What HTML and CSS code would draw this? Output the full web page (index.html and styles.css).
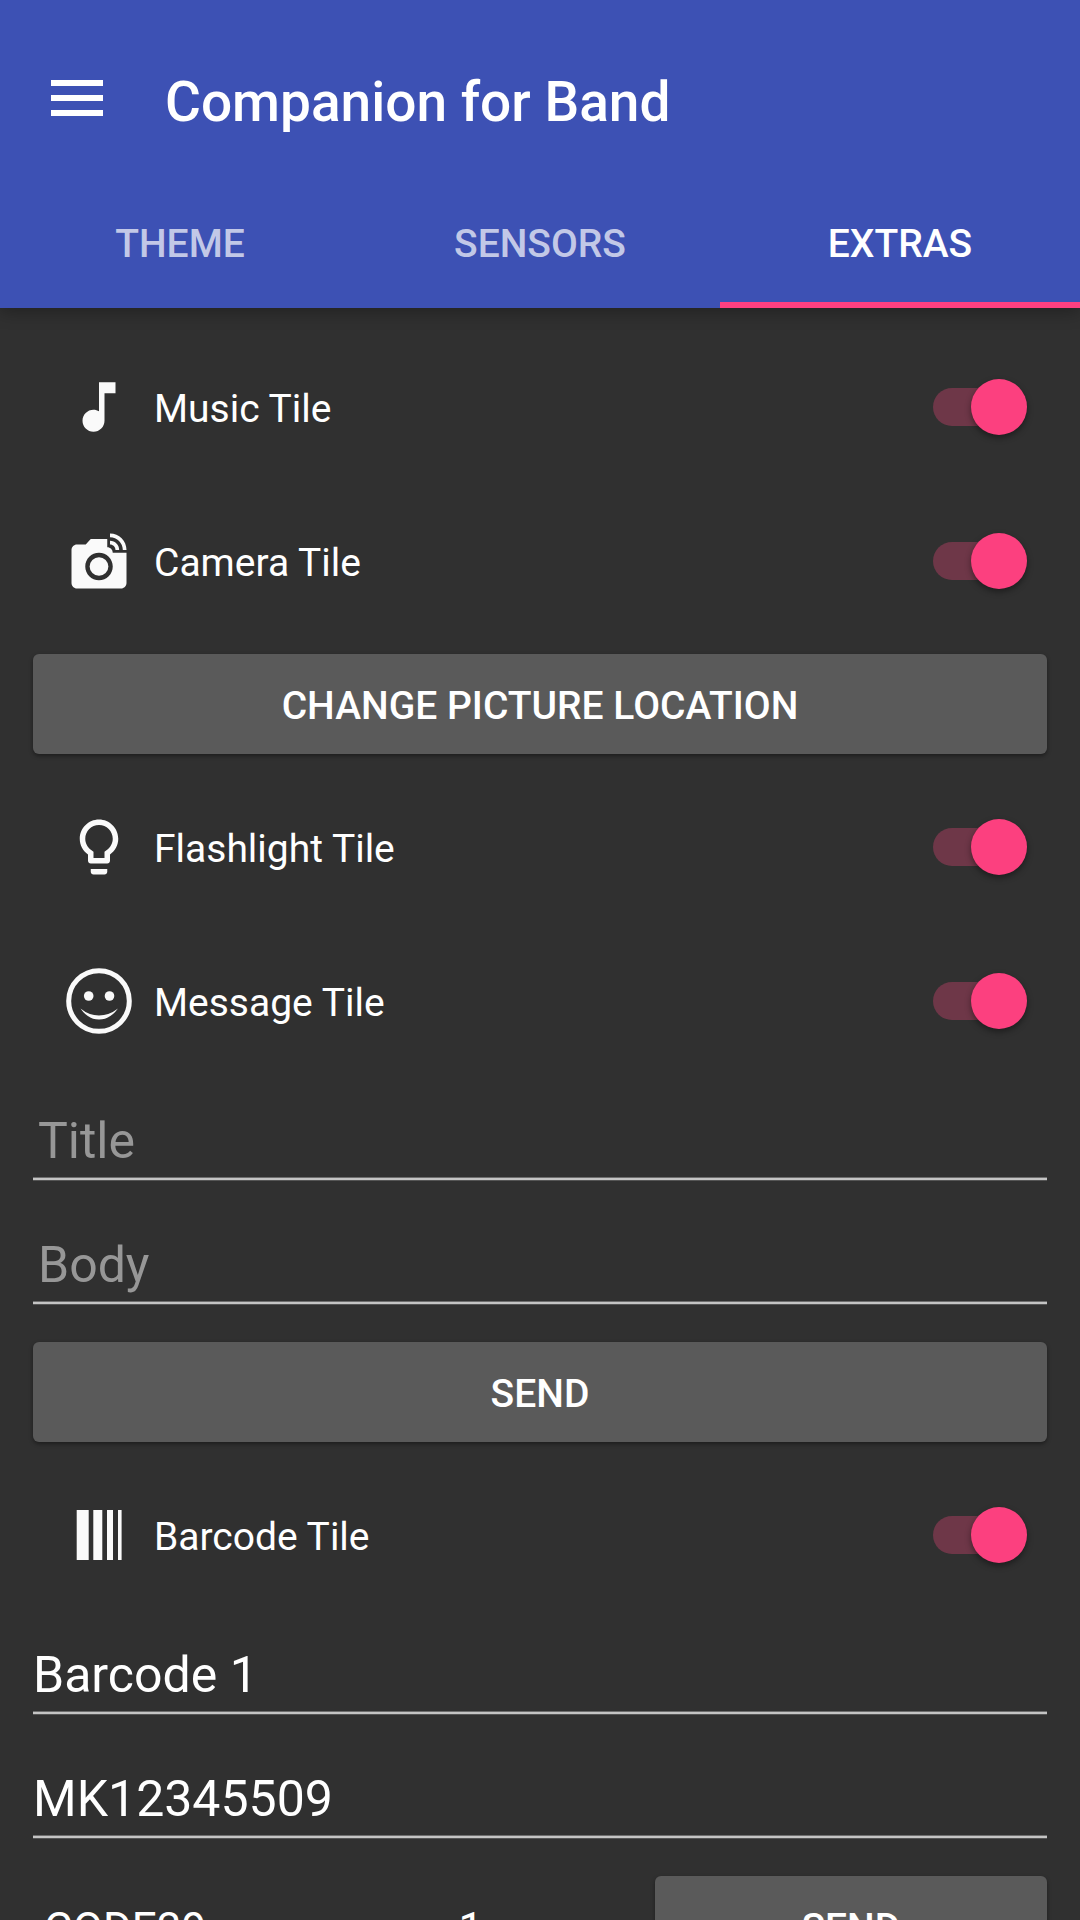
FILE: index.html
```html
<!DOCTYPE html>
<html lang="en">
<head>
<meta charset="utf-8">
<meta name="viewport" content="width=device-width, initial-scale=1">
<title>Companion for Band</title>
<link rel="stylesheet" href="styles.css">
</head>
<body>
<div class="app">
  <header class="header">
    <div class="toolbar">
      <button class="menu" type="button" aria-label="Menu">
        <svg class="menu-icon" viewBox="0 0 52 36" aria-hidden="true"><path d="M0 0h52v6H0zM0 15h52v6H0zM0 30h52v6H0z"/></svg>
      </button>
      <h1 class="title">Companion for Band</h1>
    </div>
    <nav class="tabs">
      <a class="tab" href="#theme">THEME</a>
      <a class="tab" href="#sensors">SENSORS</a>
      <a class="tab tab-active" href="#extras" aria-current="page">EXTRAS</a>
    </nav>
  </header>

  <main class="content">
    <label class="tile">
      <svg class="icon" viewBox="0 0 24 24" aria-hidden="true"><path d="M12 3v10.55c-.59-.34-1.27-.55-2-.55-2.21 0-4 1.79-4 4s1.79 4 4 4 4-1.79 4-4V7h4V3z"/></svg>
      <span class="tile-name">Music Tile</span>
      <input class="switch" type="checkbox" role="switch" checked>
    </label>
    <label class="tile">
      <svg class="icon" viewBox="0 0 24 24" aria-hidden="true"><circle cx="12" cy="14" r="3.4"/><path d="M16 3.33c2.58 0 4.67 2.09 4.67 4.67H22c0-3.31-2.69-6-6-6v1.33M16 6c1.11 0 2 .89 2 2h1.33c0-1.84-1.49-3.33-3.33-3.33V6"/><path d="M17 9c0-1.11-.89-2-2-2V4H9L7.17 6H4c-1.1 0-2 .9-2 2v12c0 1.1.9 2 2 2h16c1.1 0 2-.9 2-2V9h-5zm-5 10c-2.76 0-5-2.24-5-5s2.24-5 5-5 5 2.24 5 5-2.24 5-5 5z"/></svg>
      <span class="tile-name">Camera Tile</span>
      <input class="switch" type="checkbox" role="switch" checked>
    </label>
    <button class="button" type="button">CHANGE PICTURE LOCATION</button>
    <label class="tile">
      <svg class="icon" viewBox="0 0 24 24" aria-hidden="true"><path d="M9 21c0 .55.45 1 1 1h4c.55 0 1-.45 1-1v-1H9v1zm3-19C8.14 2 5 5.14 5 9c0 2.38 1.19 4.47 3 5.74V17c0 .55.45 1 1 1h6c.55 0 1-.45 1-1v-2.26c1.81-1.27 3-3.36 3-5.74 0-3.86-3.14-7-7-7zm2.85 11.1l-.85.6V16h-4v-2.3l-.85-.6C7.8 12.16 7 10.63 7 9c0-2.76 2.24-5 5-5s5 2.24 5 5c0 1.63-.8 3.16-2.15 4.1z"/></svg>
      <span class="tile-name">Flashlight Tile</span>
      <input class="switch" type="checkbox" role="switch" checked>
    </label>
    <label class="tile">
      <svg class="icon" viewBox="0 0 66 66" aria-hidden="true"><circle class="face" cx="33" cy="33" r="30.3"/><circle cx="22.7" cy="28" r="4.8"/><circle cx="43.5" cy="28" r="4.8"/><path d="M14.5 40.5Q23 47.5 33 47.5T52 40.5Q44 51.5 33 51.5T14.5 40.5z"/></svg>
      <span class="tile-name">Message Tile</span>
      <input class="switch" type="checkbox" role="switch" checked>
    </label>
    <input class="field" type="text" placeholder="Title" aria-label="Title">
    <input class="field" type="text" placeholder="Body" aria-label="Body">
    <button class="button" type="button">SEND</button>
    <label class="tile">
      <svg class="icon" viewBox="0 0 66 66" aria-hidden="true"><path d="M10.7 8h12v50h-12zM27.3 8h9v50h-9zM41 8h6v50h-6zM52 8h3.6v50H52z"/></svg>
      <span class="tile-name">Barcode Tile</span>
      <input class="switch" type="checkbox" role="switch" checked>
    </label>
    <input class="field" type="text" value="Barcode 1" aria-label="Barcode name">
    <input class="field" type="text" value="MK12345509" aria-label="Barcode value">
    <div class="send-row">
      <select class="spinner" aria-label="Barcode type"><option>CODE39</option></select>
      <select class="spinner" aria-label="Barcode slot"><option>1</option></select>
      <button class="button" type="button">SEND</button>
    </div>
  </main>
</div>
</body>
</html>
```
FILE: styles.css
```css
* {
  box-sizing: border-box;
}

body {
  margin: 0;
  background: #303030;
  color: #fff;
  font-family: Roboto, "Noto Sans", sans-serif;
  font-size: 39px;
}

input,
select,
button {
  margin: 0;
  border: 0;
  border-radius: 0;
  padding: 0;
  background: none;
  color: inherit;
  font: inherit;
}

.app {
  display: flex;
  flex-direction: column;
  height: 100vh;
}

/* App bar */

.header {
  position: relative;
  flex: none;
  padding-top: 22px;
  background: #3d51b4;
  box-shadow: 0 4px 16px rgba(0, 0, 0, 0.3);
}

.toolbar {
  display: flex;
  align-items: center;
  gap: 51px;
  height: 154px;
  padding: 0 40px;
}

.menu {
  display: flex;
  padding: 9px 11px 11px;
}

.menu-icon {
  width: 52px;
  height: 36px;
  fill: #fff;
}

.title {
  margin: 0;
  padding-top: 6px;
  font-size: 55px;
  font-weight: 500;
  line-height: 64px;
}

.tabs {
  display: flex;
}

.tab {
  flex: 1;
  height: 132px;
  border-bottom: 6px solid transparent;
  color: rgba(255, 255, 255, 0.7);
  font-weight: 500;
  line-height: 136px;
  text-align: center;
  text-decoration: none;
}

.tab-active {
  border-color: #ff4081;
  color: #fff;
}

/* Settings list */

.content {
  display: flex;
  flex: 1;
  flex-direction: column;
  min-height: 0;
  overflow-y: auto;
  padding: 22px;
  scrollbar-width: none;
}

.content > * {
  flex: none;
}

.tile {
  display: flex;
  align-items: center;
  gap: 22px;
  height: 154px;
  padding: 0 31px 0 44px;
}

.icon {
  flex: none;
  width: 66px;
  height: 66px;
  fill: #fafafa;
}

.face {
  fill: none;
  stroke: #fafafa;
  stroke-width: 5;
}

.tile-name {
  flex: 1;
  padding-top: 4px;
  line-height: 44px;
}

.switch {
  appearance: none;
  position: relative;
  width: 94px;
  height: 56px;
}

.switch::before {
  content: "";
  position: absolute;
  inset: 9px 6px 9px 0;
  border-radius: 19px;
  background: #6e3748;
}

.switch::after {
  content: "";
  position: absolute;
  top: 0;
  right: 0;
  width: 56px;
  height: 56px;
  border-radius: 50%;
  background: #fc407f;
  box-shadow: 0 3px 6px rgba(0, 0, 0, 0.4);
}

.button {
  height: 100px;
  margin: 16px 11px;
  border-radius: 6px;
  padding-top: 4px;
  background: #5a5a5a;
  box-shadow: 0 2px 4px rgba(0, 0, 0, 0.4);
  font-weight: 500;
  line-height: 44px;
}

.field {
  height: 103px;
  margin: 0 11px 21px;
  padding: 23px 0 0;
  background: linear-gradient(#6e6e6e 1px, #c4c4c4 1px 3px, #555 3px) bottom / 100% 4px no-repeat;
  font-size: 50px;
  line-height: 60px;
}

.field::placeholder {
  color: #979797;
  opacity: 1;
}

.field:placeholder-shown {
  padding-left: 5px;
}

.send-row {
  display: grid;
  grid-template-columns: 2fr 1fr 2fr;
}

.spinner {
  appearance: none;
  width: 100%;
  height: 132px;
  padding: 6px 22px 0;
  font-size: 44px;
}
```
